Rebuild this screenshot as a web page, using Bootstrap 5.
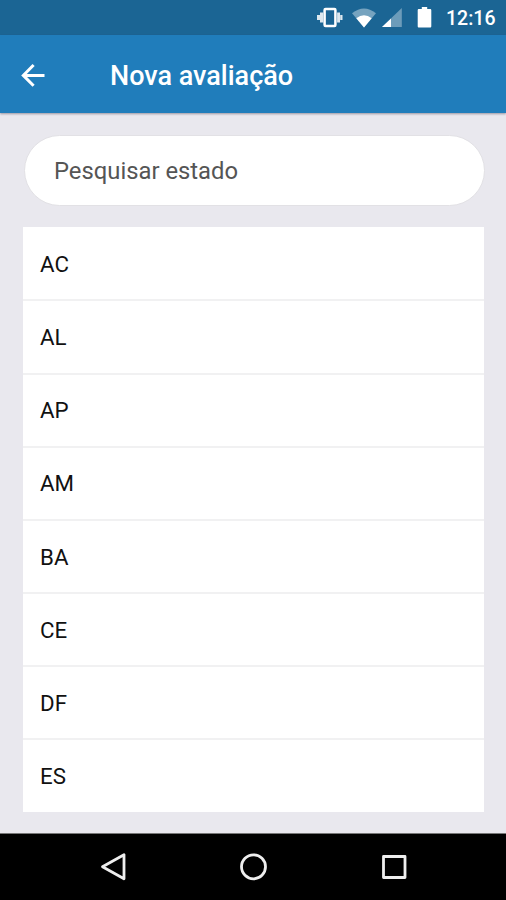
<!DOCTYPE html>
<html lang="pt-BR">
<head>
<meta charset="utf-8">
<meta name="viewport" content="width=device-width, initial-scale=1">
<title>Nova avaliação</title>
<link href="https://cdn.jsdelivr.net/npm/bootstrap@5.3.0/dist/css/bootstrap.min.css" rel="stylesheet">
<style>
  body { font-family: Roboto, "Liberation Sans", sans-serif; background: #e9e8ee; height: 900px; overflow: hidden; }
  .status-bar { height: 35px; background: #1b6594; padding: 1px 11px 0 0; }
  .status-bar svg { flex: none; }
  .battery { margin-left: 14px; }
  .clock { font-size: 19.5px; font-weight: 500; line-height: 35px; width: 49px; margin-left: 13px; white-space: nowrap; }
  .app-bar { height: 78px; background: #207dbb; padding: 2px 0 0 20px; box-shadow: 0 1px 2px rgba(60,50,70,.45); }
  .back-btn { width: 26px; height: 26px; line-height: 0; }
  .app-title { font-size: 27px; font-weight: 500; line-height: 32px; margin: 2px 0 0 64px; }
  .page-body { padding: 22px 22px 0 23px; }
  .search-box, .search-box:focus { height: 71px; width: 461px; margin-left: 1px; padding: 0 28px 0 29px; border: 1px solid #e2e1e5; font-size: 23.8px; color: #555; background: #fff; }
  .search-box::placeholder { color: #555; opacity: 1; }
  .state-list { margin-top: 21px; --bs-list-group-border-radius: 0; }
  .state-list .list-group-item { height: 73.125px; padding: 2px 17px 0; border: 0; font-size: 22.3px; color: #111; }
  .state-list .list-group-item:first-child { height: 72.4px; padding-top: 3px; }
  .state-list .list-group-item:last-child { height: 73.8px; }
  .state-list .list-group-item + .list-group-item { border-top: 2px solid #f1f1f2; }
  .nav-bar { height: 67px; background: #000; border-top: 1px solid #777; }
  .nav-bar button { width: 140px; line-height: 0; }
</style>
</head>
<body class="d-flex flex-column">
<div class="status-bar d-flex align-items-center justify-content-end text-white">
  <svg width="27" height="22" viewBox="0 0 27 22" fill="#fff"><rect x="8.600" y="2" width="10.800" height="17" rx="1" fill="none" stroke="#fff" stroke-width="2.500"/><path d="M4 5.500h3.200v10H4zM1 8h3v5H1zM21.100 5.500h2.900v10h-2.900zM24.200 8h2.300v5h-2.300z" fill-opacity=".85"/></svg>
  <svg class="ms-2" width="26" height="22" viewBox="0 0 26 22"><path d="M1 6.200Q13-3.200 25 6.200L13 20.500z" fill="#76a3bf"/><path d="M5.300 11.200Q13 5.500 20.700 11.200L13 20.500z" fill="#fff"/></svg>
  <svg class="ms-1" width="22" height="22" viewBox="0 0 22 22"><path d="M1 20L20.800 1v19z" fill="#6c9cba"/><path d="M1 20l9-8.600v8.600z" fill="#fff"/></svg>
  <svg class="battery" width="16" height="22" viewBox="0 0 16 22"><path d="M4.800 0h5.400v2H13c.8 0 1.300.5 1.300 1.300v16c0 .8-.5 1.300-1.300 1.300H2C1.200 20.600.7 20.100.7 19.300v-16C.7 2.500 1.200 2 2 2h2.800z" fill="#fff"/></svg>
  <span class="clock">12:16</span>
</div>
<header class="app-bar d-flex align-items-center text-white">
  <button type="button" class="back-btn btn p-0 border-0 rounded-0" aria-label="Voltar"><svg width="26" height="26" viewBox="0 0 26 26" fill="none" stroke="#fff" stroke-width="3"><path d="M24.500 13.400H4M13.600 3L3.300 13.400l10.300 10.400"/></svg></button>
  <h1 class="app-title">Nova avaliação</h1>
</header>
<main class="page-body flex-grow-1">
  <input type="text" class="form-control rounded-pill search-box" placeholder="Pesquisar estado" aria-label="Pesquisar estado">
  <ul class="list-group list-group-flush state-list">
    <li class="list-group-item d-flex align-items-center">AC</li>
    <li class="list-group-item d-flex align-items-center">AL</li>
    <li class="list-group-item d-flex align-items-center">AP</li>
    <li class="list-group-item d-flex align-items-center">AM</li>
    <li class="list-group-item d-flex align-items-center">BA</li>
    <li class="list-group-item d-flex align-items-center">CE</li>
    <li class="list-group-item d-flex align-items-center">DF</li>
    <li class="list-group-item d-flex align-items-center">ES</li>
  </ul>
</main>
<nav class="nav-bar d-flex justify-content-center align-items-center" aria-label="Sistema">
  <button type="button" class="btn p-0 border-0" aria-label="Voltar"><svg width="30" height="30" viewBox="0 0 30 30" fill="none" stroke="#eee" stroke-width="2.800" stroke-linejoin="round"><path d="M26 2.800v24L4.500 14.800z"/></svg></button>
  <button type="button" class="btn p-0 border-0" aria-label="Início"><svg width="30" height="30" viewBox="0 0 30 30" fill="none" stroke="#eee" stroke-width="2.800"><circle cx="15.500" cy="14.800" r="12"/></svg></button>
  <button type="button" class="btn p-0 border-0" aria-label="Recentes"><svg width="30" height="30" viewBox="0 0 30 30" fill="none" stroke="#eee" stroke-width="2.800" stroke-linejoin="round"><rect x="5.500" y="4.500" width="21.500" height="21"/></svg></button>
</nav>
<script src="https://cdn.jsdelivr.net/npm/bootstrap@5.3.0/dist/js/bootstrap.bundle.min.js"></script>
</body>
</html>
